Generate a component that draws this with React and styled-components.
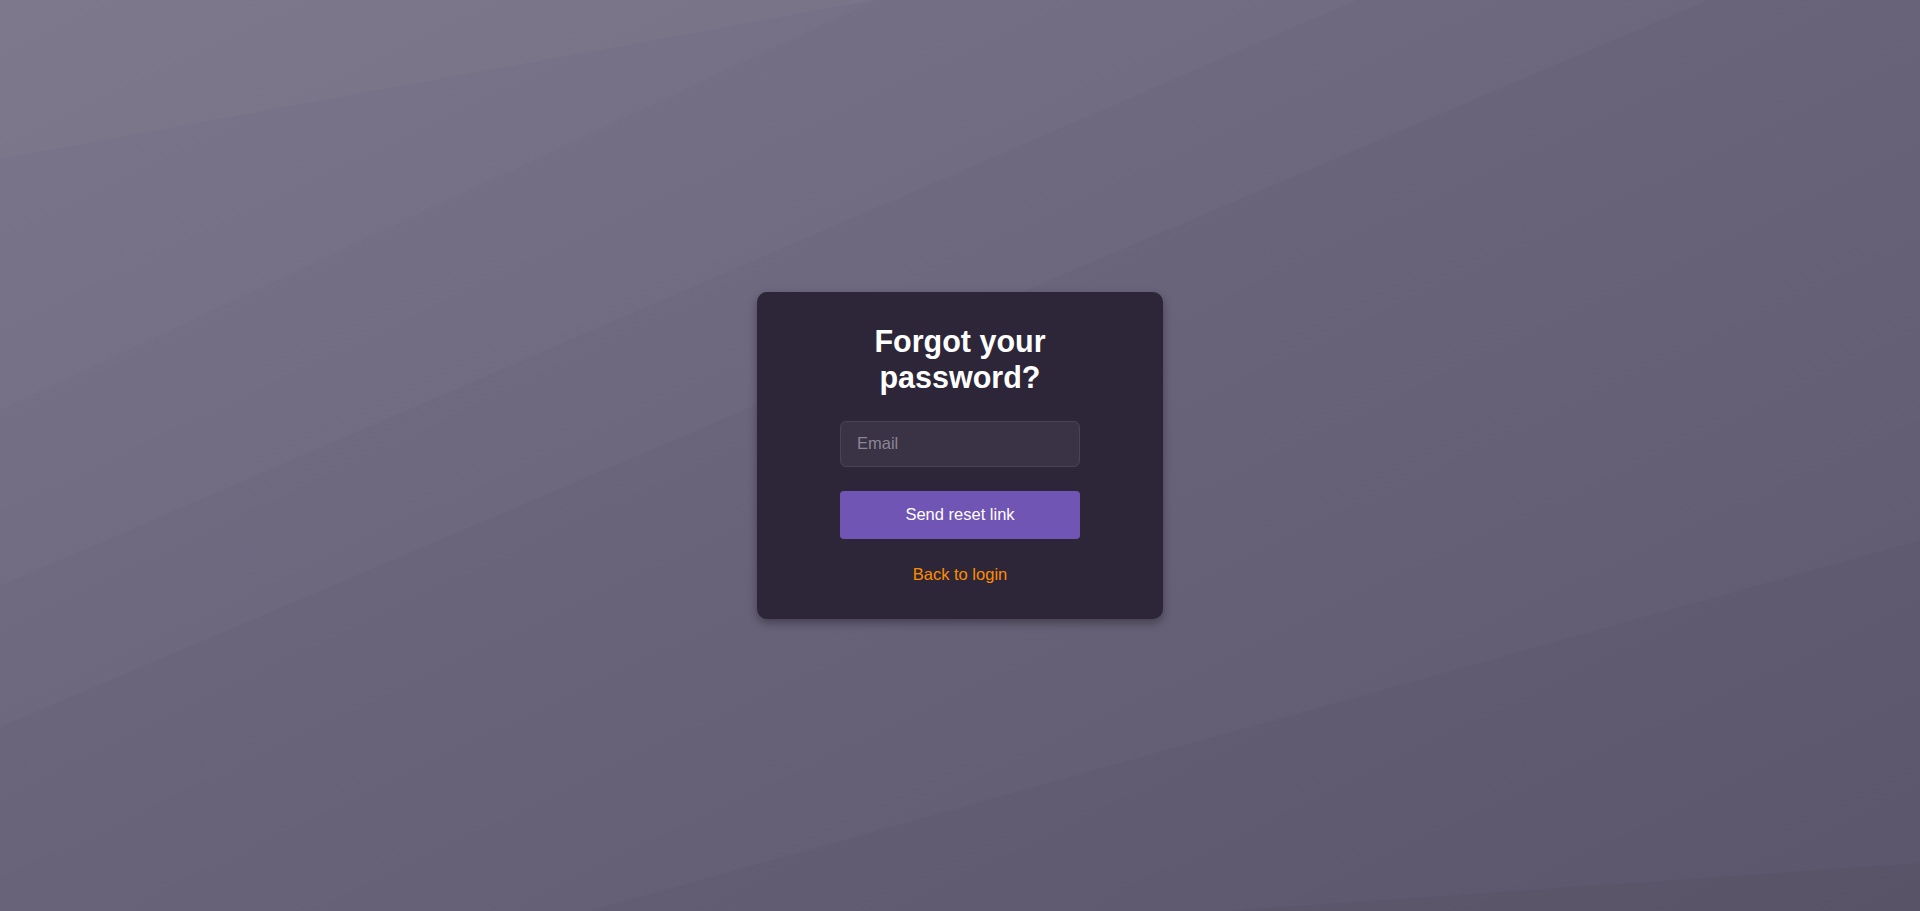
import React from 'react';
import styled, { createGlobalStyle } from 'styled-components';

const GlobalStyle = createGlobalStyle`
    html,
    body {
        margin: 0;
        height: 100%;
    }
    body {
        font-family: 'Liberation Sans', Arial, sans-serif;
        background: #6b6579;
    }
    * {
        box-sizing: border-box;
    }
`;

const Page = styled.main`
    position: relative;
    min-height: 100vh;
    display: flex;
    align-items: center;
    justify-content: center;
    overflow: hidden;
`;

const Backdrop = styled.svg`
    position: absolute;
    inset: 0;
    width: 100%;
    height: 100%;
    z-index: 0;
`;

const Card = styled.form`
    position: relative;
    z-index: 1;
    width: 406px;
    padding: 32px 83px 35px;
    border-radius: 10px;
    background-color: #2d2639;
    box-shadow: 0 4px 10px rgba(0, 0, 0, 0.35);
    display: flex;
    flex-direction: column;
    align-items: stretch;
`;

const Title = styled.h1`
    margin: 0 0 25px;
    font-size: 30.5px;
    line-height: 35.7px;
    font-weight: 700;
    color: #ffffff;
    text-align: center;
`;

const Input = styled.input`
    width: 100%;
    height: 46px;
    padding: 0 16px;
    border: 1px solid #4a4357;
    border-radius: 6px;
    background-color: #3a3346;
    color: #ffffff;
    font-family: inherit;
    font-size: 16.5px;
    outline: none;
    &::placeholder {
        color: #8b8595;
    }
`;

const Button = styled.button`
    width: 100%;
    height: 48px;
    margin-top: 24px;
    border: none;
    border-radius: 4px;
    background-color: #7055b5;
    color: #ffffff;
    font-family: inherit;
    font-size: 16.5px;
    cursor: pointer;
`;

const BackLink = styled.a`
    margin-top: 26px;
    text-align: center;
    color: #ff8c00;
    font-size: 16.5px;
    line-height: 19px;
    text-decoration: none;
    cursor: pointer;
`;

// faint bands fanning out of the top-left and bottom-right corners
const bands = [
    { points: '0,0 1708,0 0,727', fill: '#ffffff', opacity: 0.025 },
    { points: '0,0 1357,0 0,586', fill: '#ffffff', opacity: 0.022 },
    { points: '0,0 875,0 0,410', fill: '#ffffff', opacity: 0.02 },
    { points: '0,0 875,0 0,159', fill: '#ffffff', opacity: 0.025 },
    { points: '588,911 1920,540 1920,911', fill: '#000000', opacity: 0.025 },
    { points: '1224,911 1920,863 1920,911', fill: '#000000', opacity: 0.03 }
];

const Background = () => (
    <Backdrop viewBox="0 0 1920 911" preserveAspectRatio="none" aria-hidden="true">
        <defs>
            <linearGradient id="bg" x1="0" y1="0" x2="1" y2="1">
                <stop offset="0" stopColor="#736d85" />
                <stop offset="1" stopColor="#5f596f" />
            </linearGradient>
        </defs>
        <rect width="1920" height="911" fill="url(#bg)" />
        {bands.map(shape => (
            <polygon key={shape.points} points={shape.points} fill={shape.fill} fillOpacity={shape.opacity} />
        ))}
    </Backdrop>
);

export default function App() {
    return (
        <>
            <GlobalStyle />
            <Page>
                <Background />
                <Card onSubmit={e => e.preventDefault()}>
                    <Title>Forgot your password?</Title>
                    <Input type="email" placeholder="Email" />
                    <Button type="submit">Send reset link</Button>
                    <BackLink>Back to login</BackLink>
                </Card>
            </Page>
        </>
    );
}
